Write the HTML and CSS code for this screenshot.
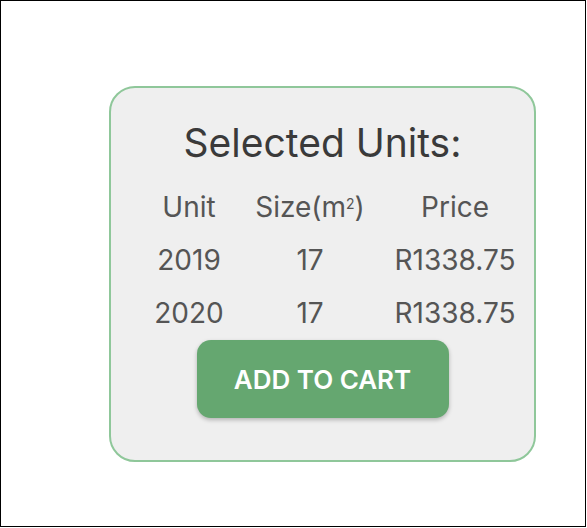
FILE: index.html
```html
<!DOCTYPE html>
<html>
<head>
<meta charset="utf-8">
<link rel="stylesheet" href="styles.css">
</head>
<body>
<div class="frame">
  <div class="card">
    <h2 class="title">Selected Units:</h2>
    <div class="units">
      <div class="cell head">Unit</div>
      <div class="cell head">Size(m<sup>2</sup>)</div>
      <div class="cell head">Price</div>
      <div class="cell">2019</div>
      <div class="cell">17</div>
      <div class="cell">R1338.75</div>
      <div class="cell">2020</div>
      <div class="cell">17</div>
      <div class="cell">R1338.75</div>
    </div>
    <button class="cart-btn">ADD TO CART</button>
  </div>
</div>
</body>
</html>
```

FILE: styles.css
```css
html, body {
  margin: 0;
  padding: 0;
  background: #ffffff;
}
.frame {
  box-sizing: border-box;
  width: 586px;
  height: 527px;
  border: 1px solid #000;
  padding: 85px 0 0 108px;
  font-family: Inter, "Open Sans", sans-serif;
}
.card {
  box-sizing: border-box;
  width: 427px;
  height: 376px;
  border: 2px solid #8fc79a;
  border-radius: 26px;
  background: #efefef;
  display: flex;
  flex-direction: column;
  align-items: center;
  padding-top: 36px;
}
.title {
  margin: 0;
  height: 38px;
  line-height: 38px;
  font-size: 39px;
  font-weight: 400;
  color: #3a3a3a;
}
.units {
  align-self: flex-start;
  margin: 18px 0 0 28px;
  display: grid;
  grid-template-columns: 100px 142px 148px;
  grid-auto-rows: 53px;
}
.cell {
  display: flex;
  align-items: center;
  justify-content: center;
  font-size: 28px;
  color: #555;
}
.cell sup {
  font-size: 14px;
  position: relative;
  top: -3px;
}
.cart-btn {
  margin-top: 1px;
  width: 252px;
  height: 78px;
  border: none;
  border-radius: 14px;
  background: #65a770;
  color: #fff;
  font-family: inherit;
  font-size: 26px;
  font-weight: 600;
  box-shadow: 0 2px 4px rgba(0,0,0,0.25);
}
```
